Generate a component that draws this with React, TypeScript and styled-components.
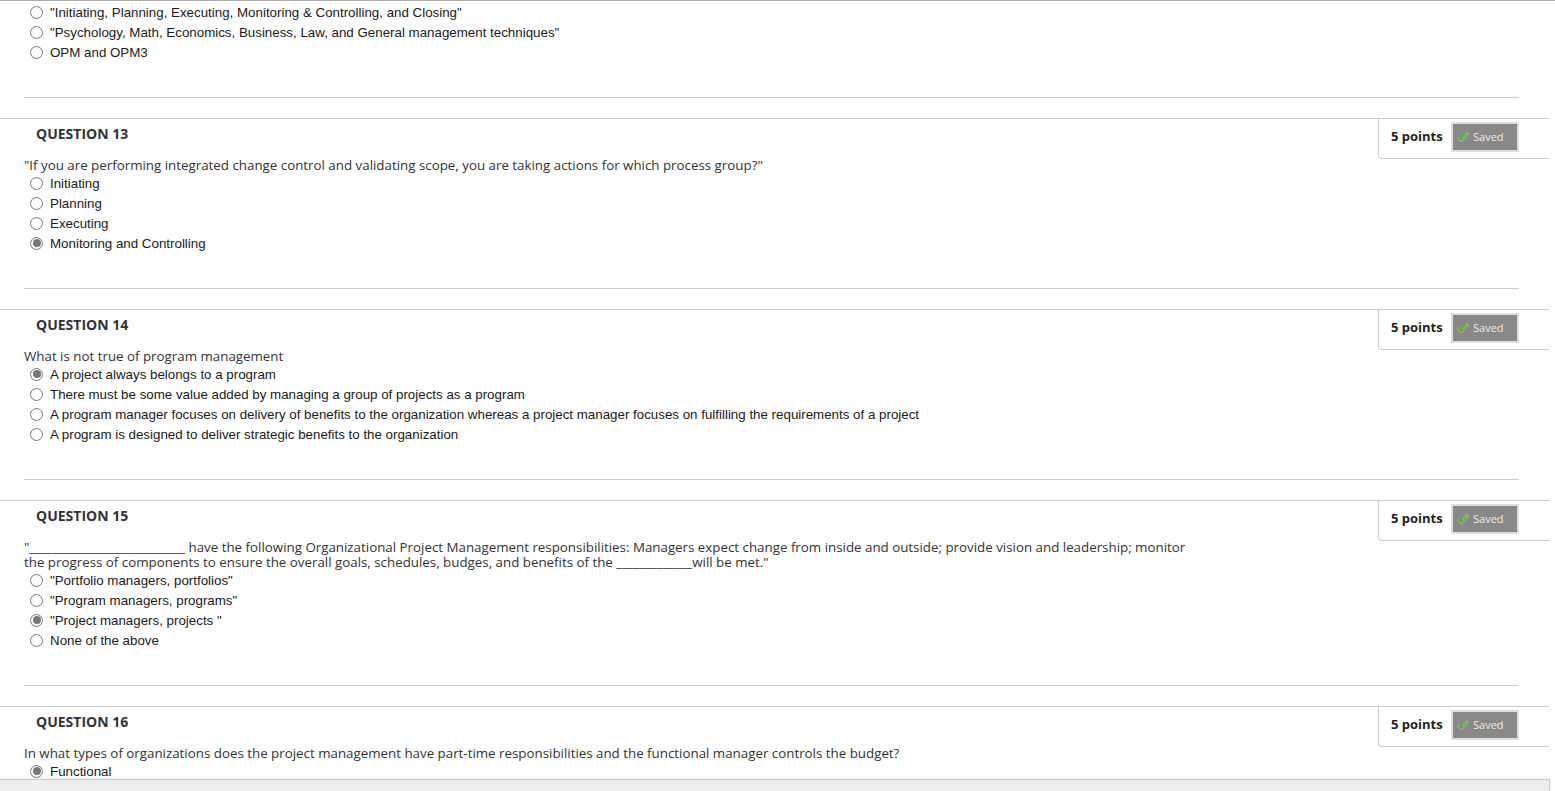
import React from "react";
import styled, { createGlobalStyle } from "styled-components";

const Global = createGlobalStyle`
  html, body {
    margin: 0;
    padding: 0;
    background: #fff;
    overflow: hidden;
  }
  body {
    height: 791px;
  }
`;

const Page = styled.div`
  height: 791px;
  overflow: hidden;
  border-top: 1px solid #aaa;
  box-sizing: border-box;
  padding-top: 1px;
`;

const Section = styled.section`
  border-top: 1px solid #ccc;
  margin: 20px 6px 0 0;
`;

const Header = styled.div`
  display: flex;
  justify-content: space-between;
  align-items: flex-start;
  height: 39px;
`;

const Title = styled.h3`
  margin: 0;
  padding: 6px 0 0 36px;
  font: 700 14px/18px "Open Sans", sans-serif;
  color: #333;
`;

const PointsBox = styled.div`
  display: flex;
  align-items: flex-start;
  box-sizing: border-box;
  width: 171px;
  height: 40px;
  padding: 3px 0 0 12px;
  border-left: 1px solid #ccc;
  border-bottom: 1px solid #ccc;
  border-bottom-left-radius: 4px;
`;

const Points = styled.span`
  font: 700 13px/18px "Open Sans", sans-serif;
  color: #222;
  width: 60px;
  margin-top: 5px;
`;

const SavedBadge = styled.span`
  display: flex;
  align-items: center;
  box-sizing: border-box;
  width: 68px;
  height: 30px;
  padding-left: 4px;
  gap: 4px;
  background: #888;
  border: 2px solid #ddd;
  font: 400 11px/14px "Open Sans", sans-serif;
  color: #eee;
`;

const Prompt = styled.p`
  margin: 0;
  padding: 0 0 0 24px;
  font: 400 13.33px/15px "Open Sans", sans-serif;
  color: #333;
`;

const Blank = styled.span`
  letter-spacing: -0.07px;
`;

const Options = styled.div`
  display: flex;
  flex-direction: column;
  padding-left: 30px;
`;

const Option = styled.div`
  display: flex;
  align-items: center;
  gap: 7px;
  height: 20px;
  font: 400 13.33px/18px "Liberation Sans", Arial, sans-serif;
  color: #1a1a1a;
  white-space: pre;
`;

const OptionLabel = styled.span`
  padding-top: 2px;
`;

const Radio = styled.span<{ $checked?: boolean }>`
  position: relative;
  box-sizing: border-box;
  width: 13px;
  height: 13px;
  border-radius: 50%;
  border: 1px solid #767676;
  background: #fff;
  flex: none;

  &::after {
    content: "";
    display: ${(p) => (p.$checked ? "block" : "none")};
    position: absolute;
    inset: 1.5px;
    border-radius: 50%;
    background: #767676;
  }
`;

const Rule = styled.hr<{ $gap: number }>`
  border: 0;
  border-top: 1px solid #ccc;
  margin: ${(p) => p.$gap}px 36px 0 24px;
`;

const SectionRule = styled(Rule)`
  margin-right: 30px;
`;

const BottomBar = styled.div`
  position: fixed;
  left: 0;
  right: 5px;
  bottom: 0;
  height: 11px;
  background: #eee;
  border-top: 1px solid #ccc;
  border-right: 1px solid #ccc;
  box-shadow: 0 -2px 4px rgba(0, 0, 0, 0.06);
`;

const Check = () => (
  <svg width="12" height="10" viewBox="0 0 12 10" aria-hidden="true">
    <path d="M1 5 L4.4 8.4 L11 1.2" fill="none" stroke="#cfe8bd" strokeWidth="3.2" opacity="0.5" />
    <path d="M1.6 5 L4.4 7.6 L10.2 1.8" fill="none" stroke="#4fae2a" strokeWidth="2.4" />
    <path d="M5 6.6 L10.2 1.6" fill="none" stroke="#93dd63" strokeWidth="1" />
  </svg>
);

type QuestionData = {
  num: number;
  prompt: React.ReactNode;
  options: string[];
  selected?: number;
};

const questions: QuestionData[] = [
  {
    num: 13,
    prompt: '"If you are performing integrated change control and validating scope, you are taking actions for which process group?"',
    options: ["Initiating", "Planning", "Executing", "Monitoring and Controlling"],
    selected: 3,
  },
  {
    num: 14,
    prompt: "What is not true of program management",
    options: [
      "A project always belongs to a program",
      "There must be some value added by managing a group of projects as a program",
      "A program manager focuses on delivery of benefits to the organization whereas a project manager focuses on fulfilling the requirements of a project",
      "A program is designed to deliver strategic benefits to the organization",
    ],
    selected: 0,
  },
  {
    num: 15,
    prompt: (
      <>
        "<Blank>___________________________</Blank> have the following Organizational Project Management responsibilities: Managers expect change from inside and outside; provide vision and leadership; monitor
        <br />
        the progress of components to ensure the overall goals, schedules, budges, and benefits of the _____________will be met."
      </>
    ),
    options: ['"Portfolio managers, portfolios"', '"Program managers, programs"', '"Project managers, projects "', "None of the above"],
    selected: 2,
  },
  {
    num: 16,
    prompt: "In what types of organizations does the project management have part-time responsibilities and the functional manager controls the budget?",
    options: ["Functional"],
    selected: 0,
  },
];

const OptionList = ({ options, selected }: { options: string[]; selected?: number }) => (
  <Options>
    {options.map((o, i) => (
      <Option key={o}>
        <Radio $checked={i === selected} />
        <OptionLabel>{o}</OptionLabel>
      </Option>
    ))}
  </Options>
);

const Question = ({ q }: { q: QuestionData }) => (
  <Section>
    <Header>
      <Title>QUESTION {q.num}</Title>
      <PointsBox>
        <Points>5 points</Points>
        <SavedBadge>
          <Check />
          Saved
        </SavedBadge>
      </PointsBox>
    </Header>
    <Prompt>{q.prompt}</Prompt>
    <OptionList options={q.options} selected={q.selected} />
    <SectionRule $gap={35} />
  </Section>
);

export default function App() {
  return (
    <Page>
      <Global />
      <div>
        <OptionList
          options={[
            '"Initiating, Planning, Executing, Monitoring & Controlling, and Closing"',
            '"Psychology, Math, Economics, Business, Law, and General management techniques"',
            "OPM and OPM3",
          ]}
        />
        <Rule $gap={35} />
      </div>
      {questions.map((q) => (
        <Question key={q.num} q={q} />
      ))}
      <BottomBar />
    </Page>
  );
}
